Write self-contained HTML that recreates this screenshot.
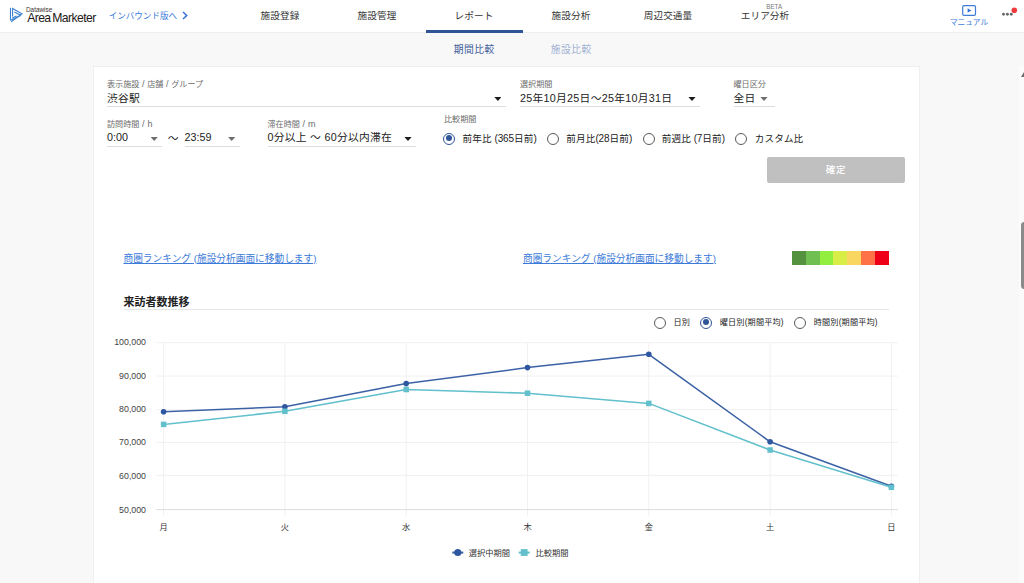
<!DOCTYPE html>
<html lang="ja">
<head>
<meta charset="utf-8">
<title>Area Marketer</title>
<style>
*{box-sizing:border-box;margin:0;padding:0}
html,body{width:1024px;height:583px;overflow:hidden;background:#f8f8f8}
body{font-family:"Liberation Sans","Noto Sans CJK JP",sans-serif;color:#222;position:relative;font-size:9.33px}
.abs{position:absolute;white-space:nowrap}
#hdr{position:absolute;left:0;top:0;width:1024px;height:33px;background:#fff;border-bottom:1px solid #eeeeee}
.nav{position:absolute;top:0;height:33px;width:97px;text-align:center;font-size:9.6px;line-height:31px;color:#333;letter-spacing:.15px}
.nav.act:after{content:"";position:absolute;left:0;right:0;bottom:0;height:3.5px;background:#2f5597}
.sub{position:absolute;top:33px;height:33px;width:97px;text-align:center;font-size:9.75px;line-height:33.5px;color:#3c5a99;letter-spacing:.5px;text-indent:.5px}
#card{position:absolute;left:93px;top:66px;width:826.5px;height:530px;background:#fff;border:1px solid #efefef}
.lbl{position:absolute;white-space:nowrap;font-size:8.1px;color:#6b6b6b;line-height:10px;word-spacing:.4px}
.val{position:absolute;white-space:nowrap;font-size:10.75px;color:#222;line-height:14px;letter-spacing:.28px}
.ul{position:absolute;height:1px;background:#dedede}
.arr{position:absolute;width:7.2px;height:4px;margin-left:-.1px;margin-top:.3px;background:#1c1c1c;clip-path:polygon(0 0,100% 0,50% 100%)}
.arr.g{background:#6e6e6e}
.l{font-size:9px;line-height:0}
.rad{position:absolute;width:12px;height:12px;border-radius:50%;border:1.45px solid #5a5a5a;background:#fff}
.rad.on{border-color:#2f5597}
.rad.on:after{content:"";position:absolute;left:1.55px;top:1.55px;width:6px;height:6px;border-radius:50%;background:#2f5597}
.rt{position:absolute;white-space:nowrap;font-size:9.6px;color:#222;line-height:14px;letter-spacing:.1px}
.n{font-size:10px;letter-spacing:-.12px}
.rt2{position:absolute;white-space:nowrap;font-size:8.15px;letter-spacing:.2px;color:#222;line-height:12px}
a.lk{position:absolute;white-space:nowrap;font-size:9.7px;color:#3d7bd9;text-decoration:underline;line-height:14px}
</style>
</head>
<body>
<div id="hdr">
  <svg class="abs" style="left:8px;top:6px" width="16" height="18" viewBox="8 6 16 18">
    <g fill="none" stroke="#3a80cf" stroke-width="1.1" stroke-linecap="butt" stroke-linejoin="miter">
      <path d="M10.5 7.8 V20.4"/>
      <path d="M12.6 16.4 V8.4 L22 13.8 L11.2 21.7"/>
      <path d="M14.3 11.9 L20.9 15.3"/>
      <path d="M10.6 20.3 L20.2 15.7"/>
      <path d="M12.2 18 L16.6 16"/>
    </g>
  </svg>
  <div class="abs" style="left:26px;top:6.4px;font-size:6.4px;line-height:7px;color:#3a3331">Datawise</div>
  <div class="abs" style="left:27.2px;top:11.3px;font-size:12.2px;line-height:14px;color:#231815;letter-spacing:-.6px;word-spacing:-1px">Area Marketer</div>
  <div class="abs" style="left:108.7px;top:10px;font-size:8.55px;line-height:13px;color:#3d7bd9">インバウンド版へ</div>
  <svg class="abs" style="left:180.4px;top:10.4px" width="10" height="11" viewBox="0 0 10 11"><path d="M3 2 L6.7 5.5 L3 9" fill="none" stroke="#2f6fd6" stroke-width="1.5"/></svg>

  <div class="nav" style="left:231.5px">施設登録</div>
  <div class="nav" style="left:328.5px">施設管理</div>
  <div class="nav act" style="left:425.5px">レポート</div>
  <div class="nav" style="left:522.5px">施設分析</div>
  <div class="nav" style="left:619.5px">周辺交通量</div>
  <div class="nav" style="left:716.5px">エリア分析</div>
  <div class="abs" style="left:725.7px;width:97px;text-align:center;top:2.5px;font-size:6.3px;line-height:8px;color:#7a7a7a">BETA</div>

  <svg class="abs" style="left:962px;top:5px" width="15" height="11" viewBox="0 0 15 11">
    <rect x=".7" y=".7" width="12.8" height="9.6" rx="1.3" fill="#fff" stroke="#3d7bd9" stroke-width="1.2"/>
    <path d="M5.6 3.3 L9.3 5.5 L5.6 7.7 Z" fill="#2f6fd6"/>
  </svg>
  <div class="abs" style="left:949px;width:40px;text-align:center;top:17.5px;font-size:7.7px;line-height:10px;color:#3d7bd9">マニュアル</div>
  <svg class="abs" style="left:1000px;top:5px" width="20" height="14" viewBox="1000 5 20 14">
    <circle cx="1003.5" cy="14.3" r="1.45" fill="#6a6a6a"/><circle cx="1007.4" cy="14.3" r="1.45" fill="#6a6a6a"/><circle cx="1011.3" cy="14.3" r="1.45" fill="#6a6a6a"/>
    <circle cx="1014.3" cy="10.2" r="2.8" fill="#f23b3b"/>
  </svg>
</div>
<div class="sub" style="left:425.5px">期間比較</div>
<div class="sub" style="left:522.5px;color:#9fb1d2">施設比較</div>

<div id="card"></div>

<!-- row 1 -->
<div class="lbl" style="left:107px;top:80px">表示施設 <span class="l">/</span> 店舗 <span class="l">/</span> グループ</div>
<div class="val" style="left:107px;top:90.6px">渋谷駅</div>
<div class="arr" style="left:494.4px;top:96.7px"></div>
<div class="ul" style="left:107px;top:106px;width:399px"></div>

<div class="lbl" style="left:520px;top:80px">選択期間</div>
<div class="val" style="left:520px;top:90.6px">25年10月25日～25年10月31日</div>
<div class="arr" style="left:688.5px;top:96.7px"></div>
<div class="ul" style="left:520px;top:106px;width:180px"></div>

<div class="lbl" style="left:733.5px;top:80px">曜日区分</div>
<div class="val" style="left:733.5px;top:90.6px">全日</div>
<div class="arr g" style="left:760.5px;top:96.7px"></div>
<div class="ul" style="left:733.5px;top:106px;width:41px"></div>

<!-- row 2 -->
<div class="lbl" style="left:107px;top:119.5px">訪問時間 <span class="l">/ h</span></div>
<div class="val" style="left:107px;top:130px;letter-spacing:.05px">0:00</div>
<div class="arr g" style="left:150.7px;top:136.6px"></div>
<div class="ul" style="left:107px;top:145.5px;width:55px"></div>
<div class="val" style="left:167.7px;top:131px">～</div>
<div class="val" style="left:184.5px;top:130px;letter-spacing:.05px">23:59</div>
<div class="arr g" style="left:228.2px;top:136.6px"></div>
<div class="ul" style="left:184.5px;top:145.5px;width:55.5px"></div>

<div class="lbl" style="left:267.5px;top:119.5px">滞在時間 <span class="l">/ m</span></div>
<div class="val" style="left:267.5px;top:130px">0分以上 ～ 60分以内滞在</div>
<div class="arr" style="left:404.5px;top:136.6px"></div>
<div class="ul" style="left:267.5px;top:145.5px;width:148px"></div>

<div class="lbl" style="left:444px;top:115.2px">比較期間</div>
<div class="rad on" style="left:443.2px;top:132.6px"></div>
<div class="rt" style="left:462.6px;top:131.7px">前年比 <span class="n">(365</span>日前<span class="n">)</span></div>
<div class="rad" style="left:546.6px;top:132.6px"></div>
<div class="rt" style="left:566.3px;top:131.7px">前月比<span class="n">(28</span>日前<span class="n">)</span></div>
<div class="rad" style="left:642.5px;top:132.6px"></div>
<div class="rt" style="left:661.8px;top:131.7px">前週比 <span class="n">(7</span>日前<span class="n">)</span></div>
<div class="rad" style="left:735.3px;top:132.6px"></div>
<div class="rt" style="left:754.8px;top:131.7px">カスタム比</div>

<div class="abs" style="left:767px;top:157px;width:138px;height:26px;background:#c0c0c0;border-radius:2px;color:#fff;font-size:9.5px;font-weight:500;line-height:26px;text-align:center;letter-spacing:.7px">確定</div>

<!-- links -->
<a class="lk" style="left:123.5px;top:251.5px">商圏ランキング (施設分析画面に移動します)</a>
<a class="lk" style="left:523px;top:251.5px">商圏ランキング (施設分析画面に移動します)</a>
<div class="abs" style="left:791.7px;top:251px;width:97.3px;height:14px;display:flex">
  <i style="flex:1;background:#54923f"></i><i style="flex:1;background:#70bf52"></i><i style="flex:1;background:#92ef3f"></i><i style="flex:1;background:#d8ed45"></i><i style="flex:1;background:#f8d65f"></i><i style="flex:1;background:#ff7146"></i><i style="flex:1;background:#ee0019"></i>
</div>

<div class="abs" style="left:123.5px;top:294.7px;font-size:11px;line-height:15px;font-weight:bold;color:#222">来訪者数推移</div>
<div class="ul" style="left:123.5px;top:308.5px;width:765.5px;height:1.3px;background:#e6e6e6"></div>

<div class="rad" style="left:653.6px;top:316.8px"></div>
<div class="rt2" style="left:673.5px;top:316.8px">日別</div>
<div class="rad on" style="left:700.4px;top:316.8px"></div>
<div class="rt2" style="left:719.7px;top:316.8px">曜日別(期間平均)</div>
<div class="rad" style="left:794.1px;top:316.8px"></div>
<div class="rt2" style="left:813.7px;top:316.8px">時間別(期間平均)</div>

<!-- chart -->
<svg class="abs" style="left:94px;top:330px" width="825" height="253" viewBox="94 330 825 253" font-family="'Liberation Sans','Noto Sans CJK JP',sans-serif">
  <g stroke="#f1f1f1" stroke-width="1">
    <line x1="156.5" x2="898" y1="342.7" y2="342.7"/>
    <line x1="156.5" x2="898" y1="376.1" y2="376.1"/>
    <line x1="156.5" x2="898" y1="409.6" y2="409.6"/>
    <line x1="156.5" x2="898" y1="442.5" y2="442.5"/>
    <line x1="156.5" x2="898" y1="475.4" y2="475.4"/>
    <line x1="163.6" x2="163.6" y1="342.7" y2="516"/>
    <line x1="284.9" x2="284.9" y1="342.7" y2="516"/>
    <line x1="406.2" x2="406.2" y1="342.7" y2="516"/>
    <line x1="527.5" x2="527.5" y1="342.7" y2="516"/>
    <line x1="648.8" x2="648.8" y1="342.7" y2="516"/>
    <line x1="770.1" x2="770.1" y1="342.7" y2="516"/>
    <line x1="891.4" x2="891.4" y1="342.7" y2="516"/>
  </g>
  <line x1="156.5" x2="898" y1="509.6" y2="509.6" stroke="#dcdcdc" stroke-width="1"/>
  <g font-size="8.8" fill="#444" text-anchor="end">
    <text x="146" y="344.8">100,000</text>
    <text x="146" y="379.0">90,000</text>
    <text x="146" y="412.0">80,000</text>
    <text x="146" y="445.2">70,000</text>
    <text x="146" y="479.2">60,000</text>
    <text x="146" y="512.5">50,000</text>
  </g>
  <g font-size="8.2" fill="#333" text-anchor="middle">
    <text x="163.6" y="529.6">月</text>
    <text x="284.9" y="529.6">火</text>
    <text x="406.2" y="529.6">水</text>
    <text x="527.5" y="529.6">木</text>
    <text x="648.8" y="529.6">金</text>
    <text x="770.1" y="529.6">土</text>
    <text x="891.4" y="529.6">日</text>
  </g>
  <polyline fill="none" stroke="#3b62a6" stroke-width="1.55" stroke-linejoin="round" points="163.6,411.8 284.9,406.7 406.2,383.6 527.5,367.6 648.8,354.3 770.1,441.8 891.4,486.3"/>
  <g fill="#2f56a0">
    <circle cx="163.6" cy="411.8" r="2.8"/>
    <circle cx="284.9" cy="406.7" r="2.8"/>
    <circle cx="406.2" cy="383.6" r="2.8"/>
    <circle cx="527.5" cy="367.6" r="2.8"/>
    <circle cx="648.8" cy="354.3" r="2.8"/>
    <circle cx="770.1" cy="441.8" r="2.8"/>
    <circle cx="891.4" cy="486.3" r="2.8"/>
  </g>
  <polyline fill="none" stroke="#62c0cc" stroke-width="1.55" stroke-linejoin="round" points="163.6,424.4 284.9,411.3 406.2,389.5 527.5,393.2 648.8,403.4 770.1,450.0 891.4,487.3"/>
  <g fill="#62c0cc">
    <rect x="160.85" y="421.65" width="5.5" height="5.5"/>
    <rect x="282.15" y="408.55" width="5.5" height="5.5"/>
    <rect x="403.45" y="386.75" width="5.5" height="5.5"/>
    <rect x="524.75" y="390.45" width="5.5" height="5.5"/>
    <rect x="646.05" y="400.65" width="5.5" height="5.5"/>
    <rect x="767.35" y="447.25" width="5.5" height="5.5"/>
    <rect x="888.65" y="484.55" width="5.5" height="5.5"/>
  </g>
  <!-- legend -->
  <line x1="452.3" x2="463.3" y1="552.6" y2="552.6" stroke="#3b62a6" stroke-width="2"/>
  <circle cx="457.8" cy="552.5" r="3.6" fill="#2f56a0"/>
  <text x="468.7" y="555.7" font-size="8.25" fill="#333">選択中期間</text>
  <line x1="518.7" x2="529.7" y1="552.6" y2="552.6" stroke="#62c0cc" stroke-width="2"/>
  <rect x="520.8" y="549.1" width="6.8" height="6.8" fill="#62c0cc"/>
  <text x="535.4" y="555.7" font-size="8.25" fill="#333">比較期間</text>
</svg>

<!-- scrollbar -->
<div class="abs" style="left:1018.5px;top:66px;width:6px;height:517px;background:#fbfbfb"></div>
<div class="abs" style="left:1020.6px;top:71.6px;width:0;height:0;border-left:3.7px solid transparent;border-right:3.7px solid transparent;border-bottom:5.4px solid #6a6a6a"></div>
<div class="abs" style="left:1020.7px;top:221.5px;width:8px;height:67px;border-radius:3.5px;background:#8b8b8b"></div>
</body>
</html>
